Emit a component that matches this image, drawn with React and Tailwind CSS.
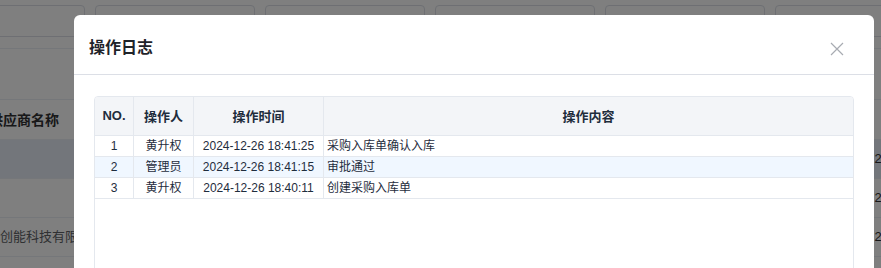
import React from "react";

const font = { fontFamily: '"Liberation Sans", Arial, "Noto Sans CJK SC", sans-serif' };

const rows = [
  { no: "1", user: "黄升权", time: "2024-12-26 18:41:25", content: "采购入库单确认入库", bg: "bg-white" },
  { no: "2", user: "管理员", time: "2024-12-26 18:41:15", content: "审批通过", bg: "bg-[#f0f7ff]" },
  { no: "3", user: "黄升权", time: "2024-12-26 18:40:11", content: "创建采购入库单", bg: "bg-white" },
];

export default function App() {
  return (
    <div className="relative w-[881px] h-[268px] overflow-hidden bg-white text-[#303133]" style={font}>
      {/* background page */}
      <div className="flex flex-col">
        <div className="flex gap-[10px] pt-[5px] ml-[-75px]">
          {[0, 1, 2, 3, 4, 5].map((i) => (
            <div key={i} className="w-[160px] h-[32px] shrink-0 rounded-[4px] border border-[#dcdfe6] bg-white" />
          ))}
        </div>
        <div className="mt-[11px] border-t border-[#ebeef5]" />
        <div className="h-[50px]" />
        <div className="flex flex-col border-t border-[#ebeef5]">
          <div className="h-[40px] flex items-center border-b border-[#ebeef5] bg-white">
            <span className="ml-[-11px] text-[14px] font-bold text-[#303133]" style={{ fontFamily: '"Noto Sans CJK SC", sans-serif' }}>供应商名称</span>
          </div>
          <div className="h-[39px] flex items-center justify-end border-b border-[#ebeef5] bg-[#e6ecf6]">
            <span className="mr-[-8px] text-[13px]">20</span>
          </div>
          <div className="h-[39px] flex items-center justify-end border-b border-[#ebeef5]">
            <span className="mr-[-8px] text-[13px]">20</span>
          </div>
          <div className="h-[39px] flex items-center justify-between border-b border-[#ebeef5]">
            <span className="text-[13px] text-[#606266]">创能科技有限公司</span>
            <span className="mr-[-8px] text-[13px]">20</span>
          </div>
        </div>
      </div>

      {/* overlay */}
      <div className="absolute inset-0 bg-black/50" />

      {/* dialog */}
      <div className="absolute left-[74px] top-[15px] w-[800px] h-[320px] bg-white rounded-[6px] flex flex-col">
        <div className="h-[60px] shrink-0 flex items-center justify-between pl-[15px] pr-[30px] border-b border-[#dcdfe6]">
          <span className="text-[16px] font-bold text-[#1f2329] mt-[2px]" style={{ fontFamily: '"Noto Sans CJK SC", sans-serif' }}>操作日志</span>
          <svg width="14" height="14" viewBox="0 0 14 14" className="mt-[8px]">
            <path d="M1 1 L13 13 M13 1 L1 13" stroke="#a8abb2" strokeWidth="1.2" fill="none" />
          </svg>
        </div>
        <div className="px-[20px] pt-[21px] flex-1 flex flex-col">
          <div className="flex-1 border border-[#e4e8ee] rounded-t-[4px] overflow-hidden flex flex-col">
            <div className="grid grid-cols-[39px_60px_130px_1fr] h-[39px] bg-[#f3f5f8] border-b border-[#e4e8ee] text-[13px] font-bold text-[#1f2d3d]" style={{ fontFamily: '"Noto Sans CJK SC", sans-serif' }}>
              <div className="flex items-center justify-center border-r border-[#e4e8ee]" style={font}>NO.</div>
              <div className="flex items-center justify-center border-r border-[#e4e8ee]">操作人</div>
              <div className="flex items-center justify-center border-r border-[#e4e8ee]">操作时间</div>
              <div className="flex items-center justify-center">操作内容</div>
            </div>
            {rows.map((r) => (
              <div key={r.no} className={`grid grid-cols-[39px_60px_130px_1fr] h-[21px] border-b border-[#e4e8ee] text-[12px] text-[#1f2d3d] ${r.bg}`}>
                <div className="flex items-center justify-center border-r border-[#e4e8ee]">{r.no}</div>
                <div className="flex items-center justify-center border-r border-[#e4e8ee]">{r.user}</div>
                <div className="flex items-center justify-center border-r border-[#e4e8ee] whitespace-nowrap">{r.time}</div>
                <div className="flex items-center pl-[3px]">{r.content}</div>
              </div>
            ))}
          </div>
        </div>
      </div>
    </div>
  );
}
